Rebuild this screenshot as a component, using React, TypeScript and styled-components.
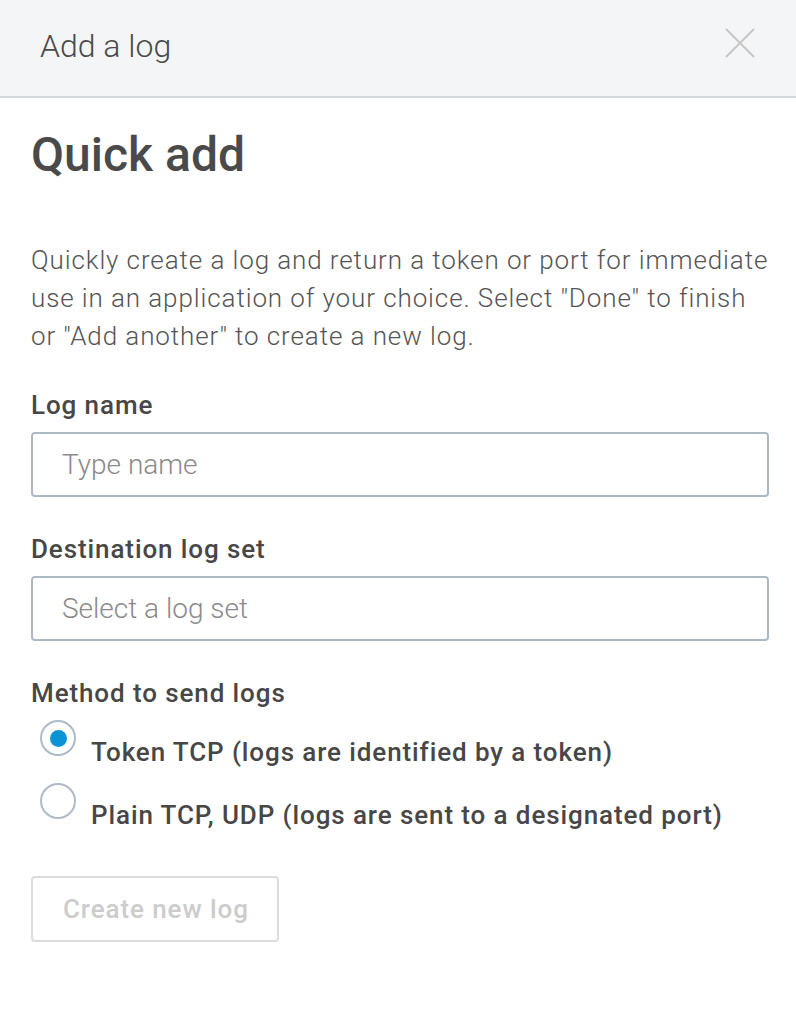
import React, { useState } from "react";
import styled, { createGlobalStyle } from "styled-components";

const GlobalStyle = createGlobalStyle`
    html, body {
        margin: 0;
        padding: 0;
        background: #ffffff;
        font-family: Roboto, "Liberation Sans", sans-serif;
        color: #4a4a4a;
    }
    * {
        box-sizing: border-box;
    }
`;

const Panel = styled.div`
    width: 796px;
    min-height: 1034px;
    background: #ffffff;
`;

const Header = styled.header`
    height: 98px;
    background: #f4f5f7;
    border-bottom: 2px solid #d3d6da;
    display: flex;
    align-items: flex-start;
    justify-content: space-between;
    padding: 28px 41px 0 40px;
`;

const HeaderTitle = styled.h1`
    margin: 0;
    font-size: 32px;
    font-weight: 300;
    line-height: 36px;
    color: #4a4a4a;
`;

const CloseButton = styled.button`
    border: none;
    background: none;
    padding: 0;
    width: 30px;
    height: 30px;
    display: flex;
    cursor: pointer;
`;

const Body = styled.main`
    padding: 29px 27px 0 31px;
`;

const Title = styled.h2`
    margin: 0;
    font-size: 48px;
    font-weight: 500;
    line-height: 56px;
    color: #4a4a4a;
`;

const Intro = styled.p`
    margin: 58px 0 0;
    font-size: 26px;
    font-weight: 300;
    line-height: 38px;
    letter-spacing: 0.9px;
    color: #555555;
`;

const Field = styled.div`
    margin-top: 35px;
    & + & {
        margin-top: 37px;
    }
`;

const Label = styled.label`
    display: block;
    font-size: 26px;
    font-weight: 500;
    line-height: 30px;
    letter-spacing: 0.9px;
    color: #474747;
    margin-bottom: 12px;
`;

const TextInput = styled.input`
    display: block;
    width: 100%;
    height: 65px;
    border: 2px solid #adb8c2;
    border-radius: 4px;
    padding: 0 29px;
    font-family: Roboto, "Liberation Sans", sans-serif;
    font-size: 28px;
    font-weight: 300;
    color: #4a4a4a;
    outline: none;
    &::placeholder {
        color: #8a8a8a;
    }
`;

const RadioList = styled.div`
    display: flex;
    flex-direction: column;
    gap: 16px;
`;

const RadioRow = styled.label`
    display: flex;
    align-items: flex-start;
    gap: 15px;
    padding-left: 9px;
    cursor: pointer;
`;

const RadioCircle = styled.span<{ $checked: boolean }>`
    flex: none;
    width: 36px;
    height: 36px;
    border-radius: 50%;
    border: 2px solid #aebbc6;
    background: #ffffff;
    display: flex;
    align-items: center;
    justify-content: center;
    &::after {
        content: "";
        width: 17px;
        height: 17px;
        border-radius: 50%;
        background: ${(p) => (p.$checked ? "#0a93d5" : "transparent")};
    }
`;

const RadioText = styled.span`
    font-size: 26px;
    font-weight: 500;
    line-height: 30px;
    letter-spacing: 0.9px;
    margin-top: 17px;
    color: #474747;
`;

const CreateButton = styled.button`
    margin-top: 46px;
    height: 66px;
    padding: 0 28px 0 30px;
    border: 2px solid #dcdcdc;
    border-radius: 4px;
    background: #ffffff;
    font-family: Roboto, "Liberation Sans", sans-serif;
    font-size: 26px;
    font-weight: 500;
    letter-spacing: 0.9px;
    color: #cccccc;
`;

const App = () => {
    const [method, setMethod] = useState("token");
    const methods = [
        { id: "token", text: "Token TCP (logs are identified by a token)" },
        { id: "plain", text: "Plain TCP, UDP (logs are sent to a designated port)" },
    ];
    return (
        <Panel>
            <GlobalStyle />
            <Header>
                <HeaderTitle>Add a log</HeaderTitle>
                <CloseButton aria-label="Close">
                    <svg width="30" height="30" viewBox="0 0 30 30">
                        <path
                            d="M1 1 L29 29 M29 1 L1 29"
                            stroke="#c6c6c6"
                            strokeWidth="2"
                            fill="none"
                        />
                    </svg>
                </CloseButton>
            </Header>
            <Body>
                <Title>Quick add</Title>
                <Intro>
                    Quickly create a log and return a token or port for immediate
                    use in an application of your choice. Select "Done" to finish
                    or "Add another" to create a new log.
                </Intro>
                <Field>
                    <Label>Log name</Label>
                    <TextInput placeholder="Type name" />
                </Field>
                <Field>
                    <Label>Destination log set</Label>
                    <TextInput placeholder="Select a log set" />
                </Field>
                <Field>
                    <Label>Method to send logs</Label>
                    <RadioList>
                        {methods.map((m) => (
                            <RadioRow key={m.id} onClick={() => setMethod(m.id)}>
                                <RadioCircle $checked={method === m.id} />
                                <RadioText>{m.text}</RadioText>
                            </RadioRow>
                        ))}
                    </RadioList>
                </Field>
                <CreateButton disabled>Create new log</CreateButton>
            </Body>
        </Panel>
    );
};

export default App;
